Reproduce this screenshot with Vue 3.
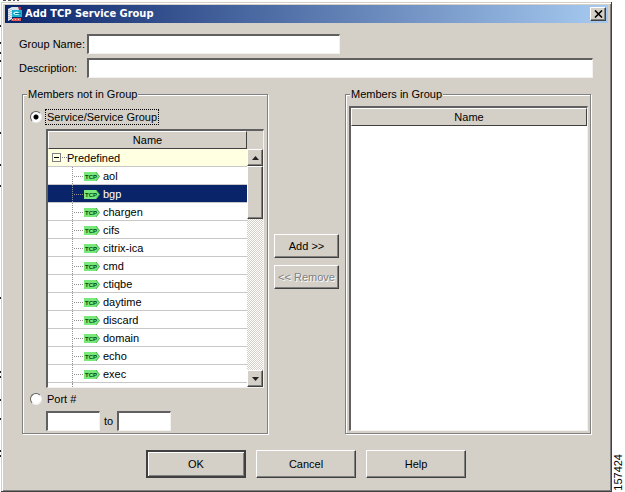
<script setup>
import { ref } from 'vue'

const services = ['aol', 'bgp', 'chargen', 'cifs', 'citrix-ica', 'cmd', 'ctiqbe', 'daytime', 'discard', 'domain', 'echo', 'exec']
const selected = ref('bgp')
const source = ref('service')
const groupName = ref('')
const description = ref('')
const portFrom = ref('')
const portTo = ref('')
const edgeMarks = [25, 42, 52, 60, 77, 132, 164, 185, 297, 371, 376, 399, 418, 450, 455]
</script>

<template>
  <div class="page">
    <svg class="edge" width="20" height="480" aria-hidden="true">
      <rect v-for="y in edgeMarks" :key="y" x="0" :y="y" width="1" height="2" fill="#222" />
      <path d="M3 0.500h3M8 0.500h3M13 0.500h2M17 0.500h2" stroke="#555" />
    </svg>
    <main class="dialog">
      <header class="titlebar">
        <svg class="app-icon" width="16" height="16" viewBox="0 0 16 16" aria-hidden="true">
          <path d="M1 3l4-2v12l-4 2z" fill="#e8eef4" />
          <path d="M5 1h8v4H5z" fill="#d8e4ec" />
          <path d="M2 4v9M4 3v9" stroke="#8898a8" stroke-dasharray="1 1" />
          <path d="M11 1h3v3h-2z" fill="#a03848" />
          <path d="M5 4h10v7H5z" fill="#18b0cc" />
          <path d="M6 7.500q3-4 7 0q-3 3-7 0" fill="#c8ffff" />
          <path d="M8 7.500h6" stroke="#0878a0" />
          <path d="M6 12h8v3H4z" fill="#e05858" />
          <path d="M5 13.500h9" stroke="#ffd0c8" stroke-dasharray="1 2" />
        </svg>
        <h1>Add TCP Service Group</h1>
        <button class="close" type="button" aria-label="Close">
          <svg width="9" height="8" viewBox="0 0 9 8"><path d="M1 0.500l7 7M8 0.500l-7 7" stroke="#000" stroke-width="1.600" /></svg>
        </button>
      </header>

      <form class="body" @submit.prevent>
        <div class="fields">
          <label for="group-name">Group Name:</label>
          <input id="group-name" v-model="groupName" class="box short" type="text">
          <label for="description">Description:</label>
          <input id="description" v-model="description" class="box" type="text">
        </div>

        <div class="panels">
          <fieldset class="panel">
            <legend>Members not in Group</legend>
            <div class="option">
              <input id="by-service" v-model="source" type="radio" name="source" value="service">
              <label for="by-service" class="focused">Service/Service Group</label>
            </div>
            <div class="list tree-list">
              <div class="viewport">
                <table>
                  <thead><tr><th>Name</th></tr></thead>
                  <tbody>
                    <tr class="group">
                      <td>
                        <div class="node">
                          <svg class="toggle" width="15" height="9" viewBox="0 0 15 9" aria-hidden="true">
                            <rect x="0.500" y="0.500" width="8" height="8" fill="#ffffe1" stroke="#808080" />
                            <path d="M2 4.500h5" stroke="#000" />
                            <path d="M10 4.500h5" stroke="#808080" stroke-dasharray="1 1" />
                          </svg>
                          Predefined
                        </div>
                      </td>
                    </tr>
                    <tr v-for="name in services" :key="name" :class="{ selected: name === selected }" @click="selected = name">
                      <td>
                        <div class="node leaf">
                          <svg width="28" height="18" viewBox="0 0 28 18" aria-hidden="true">
                            <path d="M0.500 0v18M2 9.500h9" stroke="#909090" stroke-dasharray="1 1" />
                            <path d="M12 5h12l3.500 4.500l-3.500 4.500h-12z" fill="#78e878" />
                            <path d="M24 5l3.500 4.500l-3.500 4.500" fill="none" stroke="#48b048" />
                            <text x="13" y="12" class="badge">TCP</text>
                          </svg>
                          {{ name }}
                        </div>
                      </td>
                    </tr>
                  </tbody>
                </table>
                <div class="branch"></div>
              </div>
              <div class="scrollbar">
                <button type="button" class="arrow" aria-label="Scroll up"><svg width="7" height="4"><path d="M0 4l3.500-4L7 4z" fill="#222" /></svg></button>
                <div class="track"><div class="thumb"></div></div>
                <button type="button" class="arrow" aria-label="Scroll down"><svg width="7" height="4"><path d="M0 0l3.500 4L7 0z" fill="#222" /></svg></button>
              </div>
            </div>
            <div class="option port">
              <input id="by-port" v-model="source" type="radio" name="source" value="port">
              <label for="by-port">Port #</label>
            </div>
            <div class="range">
              <input v-model="portFrom" class="box" type="text" aria-label="First port">
              <label for="port-to">to</label>
              <input id="port-to" v-model="portTo" class="box" type="text">
            </div>
          </fieldset>

          <div class="transfer">
            <button class="btn" type="button">Add &gt;&gt;</button>
            <button class="btn" type="button" disabled>&lt;&lt; Remove</button>
          </div>

          <fieldset class="panel members">
            <legend>Members in Group</legend>
            <div class="list">
              <table>
                <thead><tr><th>Name</th></tr></thead>
              </table>
            </div>
          </fieldset>
        </div>

        <footer class="actions">
          <button class="btn default" type="submit">OK</button>
          <button class="btn" type="button">Cancel</button>
          <button class="btn" type="button">Help</button>
        </footer>
      </form>
    </main>
    <aside class="figure-number">157424</aside>
  </div>
</template>

<style>
body {
  background: #fff;
}
</style>

<style scoped>
* {
  box-sizing: border-box;
}
.page {
  position: relative;
  display: flex;
  min-height: 100vh;
  padding: 2px 0 0 1px;
  font: 11px/14px "Liberation Sans", Arial, sans-serif;
  color: #000;
}
.edge {
  position: absolute;
  left: 0;
  top: 0;
}
.dialog {
  position: relative;
  flex: 1;
  display: flex;
  flex-direction: column;
  padding: 3px 3px 4px 4px;
  background: #d4d0c8;
  border: solid;
  border-width: 0 1px 1px 0;
  border-color: #404040;
  box-shadow: inset 1px 1px #d4d0c8, inset 2px 2px #fff, inset -1px -1px #808080;
}
.titlebar {
  display: flex;
  align-items: center;
  height: 18px;
  padding: 0 2px;
  background: linear-gradient(90deg, #0a246a, #a6caf0);
}
.titlebar h1 {
  flex: 1;
  margin: 0 0 0 2px;
  color: #fff;
  font: bold 11px/16px "DejaVu Sans Condensed", "DejaVu Sans", sans-serif;
}
button,
input {
  font: inherit;
  color: inherit;
}
.close,
.arrow,
.btn {
  display: flex;
  align-items: center;
  justify-content: center;
  padding: 0;
  background: #d4d0c8;
  border: 1px solid;
  border-color: #fff #404040 #404040 #fff;
  border-radius: 0;
  box-shadow: inset -1px -1px #808080;
}
.close {
  width: 16px;
  height: 14px;
}
.body {
  flex: 1;
  display: flex;
  flex-direction: column;
  padding: 11px 15px 9px 14px;
}
.fields {
  display: grid;
  grid-template-columns: 68px 1fr;
  row-gap: 4px;
  align-items: center;
  white-space: nowrap;
}
.box {
  width: 100%;
  height: 20px;
  padding: 0 3px;
  background: #fff;
  border: solid;
  border-width: 2px 1px 1px 2px;
  border-color: #606060 #f4f2ee #f4f2ee #606060;
  border-radius: 0;
  outline: 0;
}
.short {
  width: 50%;
}
.panels {
  flex: 1;
  display: grid;
  grid-template-columns: 1fr auto 1fr;
  padding: 9px 2px 0 3px;
}
.panel {
  display: flex;
  flex-direction: column;
  min-width: 0;
  margin: 0;
  padding: 8px 3px 2px 7px;
  border: 1px solid #808080;
  box-shadow: 1px 1px #fff, inset 1px 1px #fff;
}
.members {
  padding: 5px 2px 2px 3px;
}
legend {
  margin-left: -3px;
  padding: 0 1px;
  background: #d4d0c8;
}
.members legend {
  margin-left: 1px;
}
.option {
  display: flex;
  align-items: center;
  gap: 3px;
  height: 16px;
}
.option input {
  appearance: none;
  width: 12px;
  height: 12px;
  margin: 0;
  background: #fff;
  border: 1px solid;
  border-color: #606060 #eee #eee #606060;
  border-radius: 50%;
}
.option input:checked {
  background: radial-gradient(circle, #000 2px, #fff 3px);
}
.option label {
  padding: 0 1px;
  border: 1px solid transparent;
}
.option .focused {
  border: 1px dotted #000;
}
.list {
  flex: 1;
  background: #fff;
  border: solid;
  border-width: 2px 1px 1px 2px;
  border-color: #606060 #f4f2ee #f4f2ee #606060;
}
.tree-list {
  display: flex;
  margin: 4px 0 0 16px;
}
.viewport {
  flex: 1;
  display: flex;
  flex-direction: column;
}
table {
  width: 100%;
  border-collapse: separate;
  border-spacing: 0;
}
th {
  height: 18px;
  padding: 0;
  font-weight: normal;
  background: #d4d0c8;
  border: 1px solid;
  border-color: #fff #404040 #404040 #fff;
}
td {
  height: 18px;
  padding: 0;
  border-bottom: 1px solid #c8c8c8;
}
.node {
  display: flex;
  align-items: center;
  height: 17px;
  padding-left: 4px;
}
.leaf {
  gap: 3px;
  padding-left: 24px;
}
.branch {
  flex: 1;
  min-height: 3px;
  margin-left: 24px;
  border-left: 1px dotted #909090;
}
.badge {
  font: bold 6px "Liberation Sans", sans-serif;
  fill: #084808;
}
.group td {
  background: #ffffe1;
}
.selected td {
  color: #fff;
  background: #0a246a;
}
.scrollbar {
  display: flex;
  flex-direction: column;
  width: 16px;
  padding-top: 18px;
  background: #d4d0c8;
}
.arrow {
  width: 16px;
  height: 17px;
}
.track {
  flex: 1;
  background: repeating-conic-gradient(#fff 0 25%, #d4d0c8 0 50%) 0 0 / 2px 2px;
}
.thumb {
  height: 53px;
  background: #d4d0c8;
  border: 1px solid;
  border-color: #fff #404040 #404040 #fff;
  box-shadow: inset -1px -1px #808080;
}
.port {
  margin-top: 3px;
}
.range {
  display: flex;
  align-items: center;
  gap: 4px;
  margin: 4px 0 0 16px;
}
.range .box {
  width: 54px;
}
.transfer {
  display: flex;
  flex-direction: column;
  gap: 7px;
  padding: 147px 6px 0;
}
.transfer .btn {
  width: 65px;
  height: 24px;
}
.btn:disabled {
  color: #808080;
  text-shadow: 1px 1px #fff;
}
.actions {
  display: flex;
  justify-content: center;
  gap: 10px;
  padding-top: 16px;
}
.actions .btn {
  width: 100px;
  height: 28px;
}
.actions .default {
  border: 2px solid #404040;
  box-shadow: inset 1px 1px #fff, inset -1px -1px #808080;
}
.figure-number {
  align-self: flex-end;
  width: 13px;
  padding-top: 1px;
  font-size: 11px;
  line-height: 13px;
  writing-mode: vertical-rl;
  transform: rotate(180deg);
}
</style>
